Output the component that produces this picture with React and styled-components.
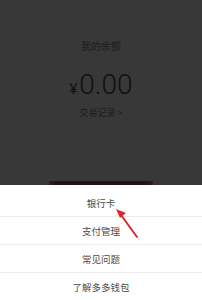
import React from "react";
import styled, { createGlobalStyle } from "styled-components";

const Global = createGlobalStyle`
  html, body { margin: 0; padding: 0; background: #383838; }
  body { width: 202px; height: 300px; overflow: hidden; font-family: "Noto Sans CJK SC", "Noto Sans", sans-serif; }
`;

const Page = styled.div`
  position: relative;
  width: 202px;
  height: 300px;
  display: flex;
  flex-direction: column;
  overflow: hidden;
`;

const Overlay = styled.div`
  height: 190px;
  background: #383838;
  display: flex;
  flex-direction: column;
  align-items: center;
`;

const Label = styled.div`
  margin-top: 39px;
  font-size: 10px;
  line-height: 14px;
  color: #1c1c1c;
`;

const Amount = styled.div`
  margin-top: 16px;
  display: flex;
  align-items: baseline;
  color: #111;
  font-family: Roboto, "Noto Sans", sans-serif;
  font-weight: 300;
`;

const Yen = styled.span`
  font-size: 15px;
  font-weight: 400;
  margin-right: 2px;
`;

const Num = styled.span`
  font-size: 28px;
  line-height: 32px;
`;

const Record = styled.div`
  margin-top: 6px;
  font-size: 9px;
  line-height: 12px;
  color: #1c1c1c;
`;

const Spacer = styled.div`
  flex: 1;
`;

const HiddenButton = styled.div`
  width: 104px;
  height: 4px;
  background: linear-gradient(90deg, #3a1c22, #1e1614 8%, #1e1614 92%, #3a1c22);
`;

const Sheet = styled.div`
  flex: 1;
  background: #ffffff;
  display: flex;
  flex-direction: column;
  padding-top: 4px;
`;

const Item = styled.div`
  height: 27px;
  display: flex;
  align-items: center;
  justify-content: center;
  font-size: 9.5px;
  color: #4a4a4a;
  border-bottom: ${(p) => (p.$last ? "none" : "1px solid #ececec")};
  flex-shrink: 0;
`;

const Arrow = styled.svg`
  position: absolute;
  left: 112px;
  top: 206px;
`;

export default function App() {
  const items = ["银行卡", "支付管理", "常见问题", "了解多多钱包"];
  return (
    <Page>
      <Global />
      <Overlay>
        <Label>我的余额</Label>
        <Amount>
          <Yen>¥</Yen>
          <Num>0.00</Num>
        </Amount>
        <Record>交易记录 &gt;</Record>
        <Spacer />
        <HiddenButton />
      </Overlay>
      <Sheet>
        {items.map((t, i) => (
          <Item key={t} $last={i === items.length - 1}>
            {t}
          </Item>
        ))}
      </Sheet>
      <Arrow width="30" height="36" viewBox="0 0 30 36">
        <line x1="25" y1="31" x2="9" y2="9" stroke="#d92b2b" strokeWidth="2" strokeLinecap="round" />
        <polygon points="4,3 14,7 8,12" fill="#d92b2b" />
      </Arrow>
    </Page>
  );
}
